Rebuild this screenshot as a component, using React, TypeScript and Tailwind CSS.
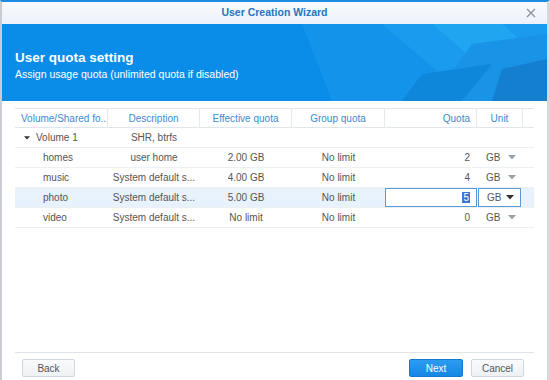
import React from 'react'

const cols = 'grid grid-cols-[93px_92px_92px_93px_92px_46px_11px]'

type Row = { name: string; desc: string; eff: string; group: string; quota: string; active?: boolean }

const rows: Row[] = [
  { name: 'homes', desc: 'user home', eff: '2.00 GB', group: 'No limit', quota: '2' },
  { name: 'music', desc: 'System default s...', eff: '4.00 GB', group: 'No limit', quota: '4' },
  { name: 'photo', desc: 'System default s...', eff: '5.00 GB', group: 'No limit', quota: '5', active: true },
  { name: 'video', desc: 'System default s...', eff: 'No limit', group: 'No limit', quota: '0' },
]

function Caret({ dark, small }: { dark?: boolean; small?: boolean }) {
  return (
    <svg width={small ? 6 : 8} height={small ? 4 : 5} viewBox="0 0 8 5">
      <path d="M0 0 L8 0 L4 4.5 Z" fill={dark ? '#333' : '#9aa3ab'} />
    </svg>
  )
}

export default function App() {
  return (
    <div className="w-[550px] h-[380px] bg-white flex flex-col border-t-2 border-[#1d8be0] border-l-2 border-l-[#c9cdd1] border-r-[3px] border-r-[#d5d8db] text-[10px] text-[#555] font-['Liberation_Sans',Arial,sans-serif] whitespace-nowrap">
      {/* title bar */}
      <div className="relative h-[22px] shrink-0 bg-gradient-to-b from-[#f8fbfe] to-[#ebf2f9] flex items-center justify-center">
        <span className="text-[10.5px] font-bold text-[#2a73c2]">User Creation Wizard</span>
        <svg className="absolute right-[11px] top-[6px]" width="10" height="10" viewBox="0 0 10 10">
          <path d="M1 1 L9 9 M9 1 L1 9" stroke="#8a939b" strokeWidth="1.3" />
        </svg>
      </div>

      {/* banner */}
      <div className="relative h-[77px] shrink-0 overflow-hidden bg-[#0a8de9] pl-[13px] pt-[25px]">
        <svg className="absolute inset-0" width="545" height="77" viewBox="0 0 545 77">
          <polygon points="300,0 545,0 545,20 420,77 330,77" fill="#1393ea" />
          <polygon points="380,0 545,0 545,77 470,77" fill="#1a9bed" />
          <polygon points="430,0 500,0 545,40 545,77 520,77" fill="#20a5f1" />
          <polygon points="470,20 545,10 545,77 430,77" fill="#1893e5" />
          <polygon points="420,50 490,40 460,77 400,77" fill="#0e86d9" />
          <polygon points="500,45 545,35 545,77 490,77" fill="#157fcf" />
        </svg>
        <div className="relative text-white">
          <div className="text-[13.5px] font-bold leading-[17px]">User quota setting</div>
          <div className="text-[10.5px] leading-[14px] mt-[1px]">Assign usage quota (unlimited quota if disabled)</div>
        </div>
      </div>

      {/* table */}
      <div className="px-[13px] pt-[7px]">
        <div className={`${cols} h-[20px] items-center border-y border-[#e1e6eb] text-[#3b8ad3]`}>
          <div className="px-[6px] border-r border-[#e6eaee] h-full flex items-center overflow-hidden">Volume/Shared fo...</div>
          <div className="border-r border-[#e6eaee] h-full flex items-center justify-center">Description</div>
          <div className="border-r border-[#e6eaee] h-full flex items-center justify-center">Effective quota</div>
          <div className="border-r border-[#e6eaee] h-full flex items-center justify-center">Group quota</div>
          <div className="border-r border-[#e6eaee] h-full flex items-center justify-end pr-[6px]">Quota</div>
          <div className="border-r border-[#e6eaee] h-full flex items-center justify-center">Unit</div>
          <div />
        </div>

        <div className={`${cols} h-[20px] items-center border-b border-[#edf0f3]`}>
          <div className="flex items-center pl-[9px] gap-[6px]">
            <Caret dark small />
            <span>Volume 1</span>
          </div>
          <div className="text-center">SHR, btrfs</div>
        </div>

        {rows.map((r) => (
          <div
            key={r.name}
            className={`${cols} h-[20px] items-center border-b border-[#edf0f3] ${r.active ? 'bg-[#e7f2fc]' : ''}`}
          >
            <div className="pl-[28px]">{r.name}</div>
            <div className="text-center">{r.desc}</div>
            <div className="text-center">{r.eff}</div>
            <div className="text-center">{r.group}</div>
            {r.active ? (
              <>
                <div className="h-[19px] flex items-center justify-end pr-[6px] border border-[#5a9ad6] bg-white">
                  <span className="bg-[#3a78d0] text-white px-[1px] leading-[11px]">{r.quota}</span>
                </div>
                <div className="h-[19px] ml-[1px] mr-[2px] flex items-center justify-between pl-[8px] pr-[6px] border border-[#5a9ad6] bg-white">
                  <span>GB</span>
                  <Caret dark />
                </div>
              </>
            ) : (
              <>
                <div className="text-right pr-[7px]">{r.quota}</div>
                <div className="flex items-center justify-between pl-[9px] pr-[7px]">
                  <span>GB</span>
                  <Caret />
                </div>
              </>
            )}
            <div />
          </div>
        ))}
      </div>

      <div className="flex-1" />

      {/* footer */}
      <div className="px-[13px] pb-[3px]">
        <div className="border-t border-[#dfe3e7] pt-[6px] flex items-center">
          <button className="ml-[7px] w-[53px] h-[18px] rounded-[2px] border border-[#cfd6dd] bg-gradient-to-b from-[#fafbfc] to-[#eef1f4] text-[#555] text-[10px]">
            Back
          </button>
          <div className="flex-1" />
          <button className="w-[54px] h-[18px] rounded-[2px] border border-[#1479d1] bg-gradient-to-b from-[#2d9bf0] to-[#1587e6] text-white text-[10px]">
            Next
          </button>
          <button className="ml-[8px] mr-[10px] w-[53px] h-[18px] rounded-[2px] border border-[#cfd6dd] bg-gradient-to-b from-[#fafbfc] to-[#eef1f4] text-[#555] text-[10px]">
            Cancel
          </button>
        </div>
      </div>
    </div>
  )
}
